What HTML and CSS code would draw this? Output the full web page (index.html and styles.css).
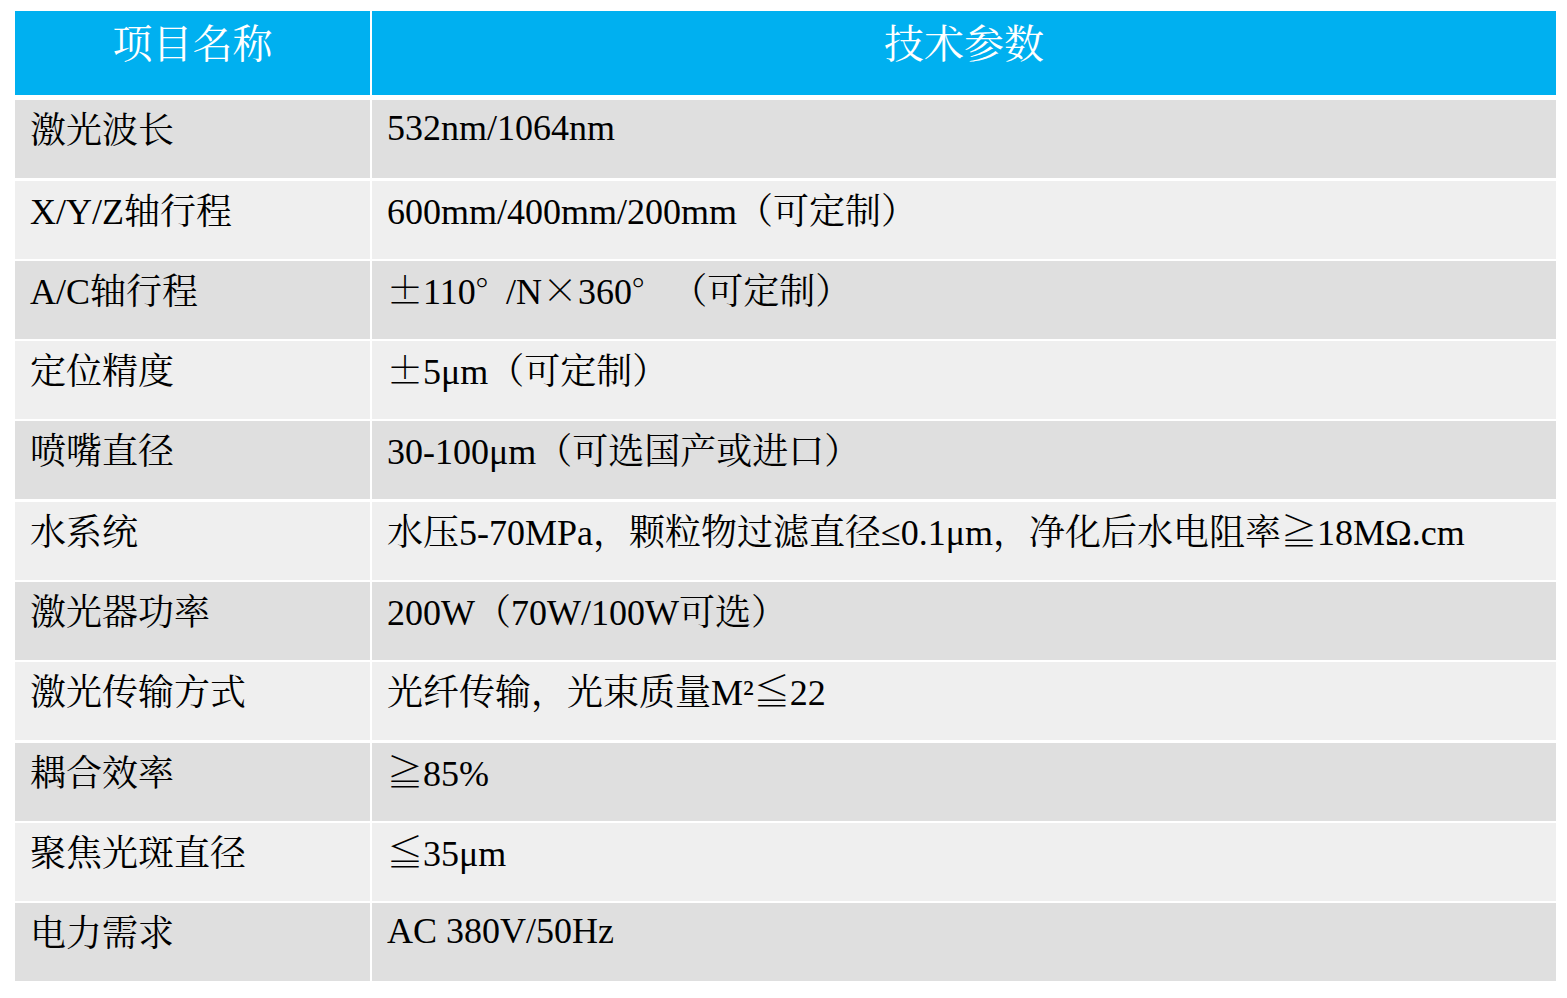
FILE: index.html
```html
<!DOCTYPE html>
<html lang="zh-CN">
<head>
<meta charset="utf-8">
<title>技术参数</title>
<link rel="stylesheet" href="styles.css">
</head>
<body>
<div class="spec">
  <div class="hd">项目名称</div>
  <div class="hd">技术参数</div>

  <div class="c odd k"><span class="zh">激光波长</span></div>
  <div class="c odd v">532nm/1064nm</div>

  <div class="c even k">X/Y/Z<span class="zh">轴行程</span></div>
  <div class="c even v">600mm/400mm/200mm<span class="zh">（可定制）</span></div>

  <div class="c odd k">A/C<span class="zh">轴行程</span></div>
  <div class="c odd v"><span class="zh">±</span>110<span class="zh deg">°</span>/N<span class="zh">×</span>360<span class="zh deg">°</span> <span class="zh">（可定制）</span></div>

  <div class="c even k"><span class="zh">定位精度</span></div>
  <div class="c even v"><span class="zh">±</span>5μm<span class="zh">（可定制）</span></div>

  <div class="c odd k"><span class="zh">喷嘴直径</span></div>
  <div class="c odd v">30-100μm<span class="zh">（可选国产或进口）</span></div>

  <div class="c even k"><span class="zh">水系统</span></div>
  <div class="c even v"><span class="zh">水压</span>5-70MPa<span class="zh">，颗粒物过滤直径</span>≤0.1μm<span class="zh">，净化后水电阻率≧</span>18MΩ.cm</div>

  <div class="c odd k"><span class="zh">激光器功率</span></div>
  <div class="c odd v">200W<span class="zh">（</span>70W/100W<span class="zh">可选）</span></div>

  <div class="c even k"><span class="zh">激光传输方式</span></div>
  <div class="c even v"><span class="zh">光纤传输，光束质量</span>M²<span class="zh">≦</span>22</div>

  <div class="c odd k"><span class="zh">耦合效率</span></div>
  <div class="c odd v"><span class="zh">≧</span>85%</div>

  <div class="c even k"><span class="zh">聚焦光斑直径</span></div>
  <div class="c even v"><span class="zh">≦</span>35μm</div>

  <div class="c odd k"><span class="zh">电力需求</span></div>
  <div class="c odd v">AC 380V/50Hz</div>
</div>
</body>
</html>
```

FILE: styles.css
```css
html, body {
  margin: 0;
  padding: 0;
  background: #ffffff;
}

body {
  font-family: "Liberation Serif", "Noto Serif CJK SC", "Noto Sans CJK SC", serif;
  color: #000000;
}

.spec {
  display: grid;
  grid-template-columns: 355px 1184px;
  column-gap: 2px;
  row-gap: 2.3px;
  margin: 11px 0 0 15px;
  width: 1541px;
}

.hd {
  height: 84px;
  margin-bottom: 3px;
  background: #00b0f0;
  color: #ffffff;
  text-align: center;
  font-family: "Noto Serif CJK SC", "Noto Sans CJK SC", sans-serif;
  font-size: 40px;
  line-height: 50px;
  padding-top: 5px;
  box-sizing: border-box;
  font-weight: 400;
}

.c {
  height: 78px;
  box-sizing: border-box;
  padding: 6px 0 0 15px;
  font-size: 36px;
  line-height: 44px;
  white-space: nowrap;
}

.odd {
  background: #dfdfdf;
}

.even {
  background: #efefef;
}

.zh {
  font-family: "Noto Serif CJK SC", "Noto Sans CJK SC", sans-serif;
  font-size: 36px;
  font-variant-east-asian: full-width;
}

.deg {
  padding-right: 18px;
}
```
